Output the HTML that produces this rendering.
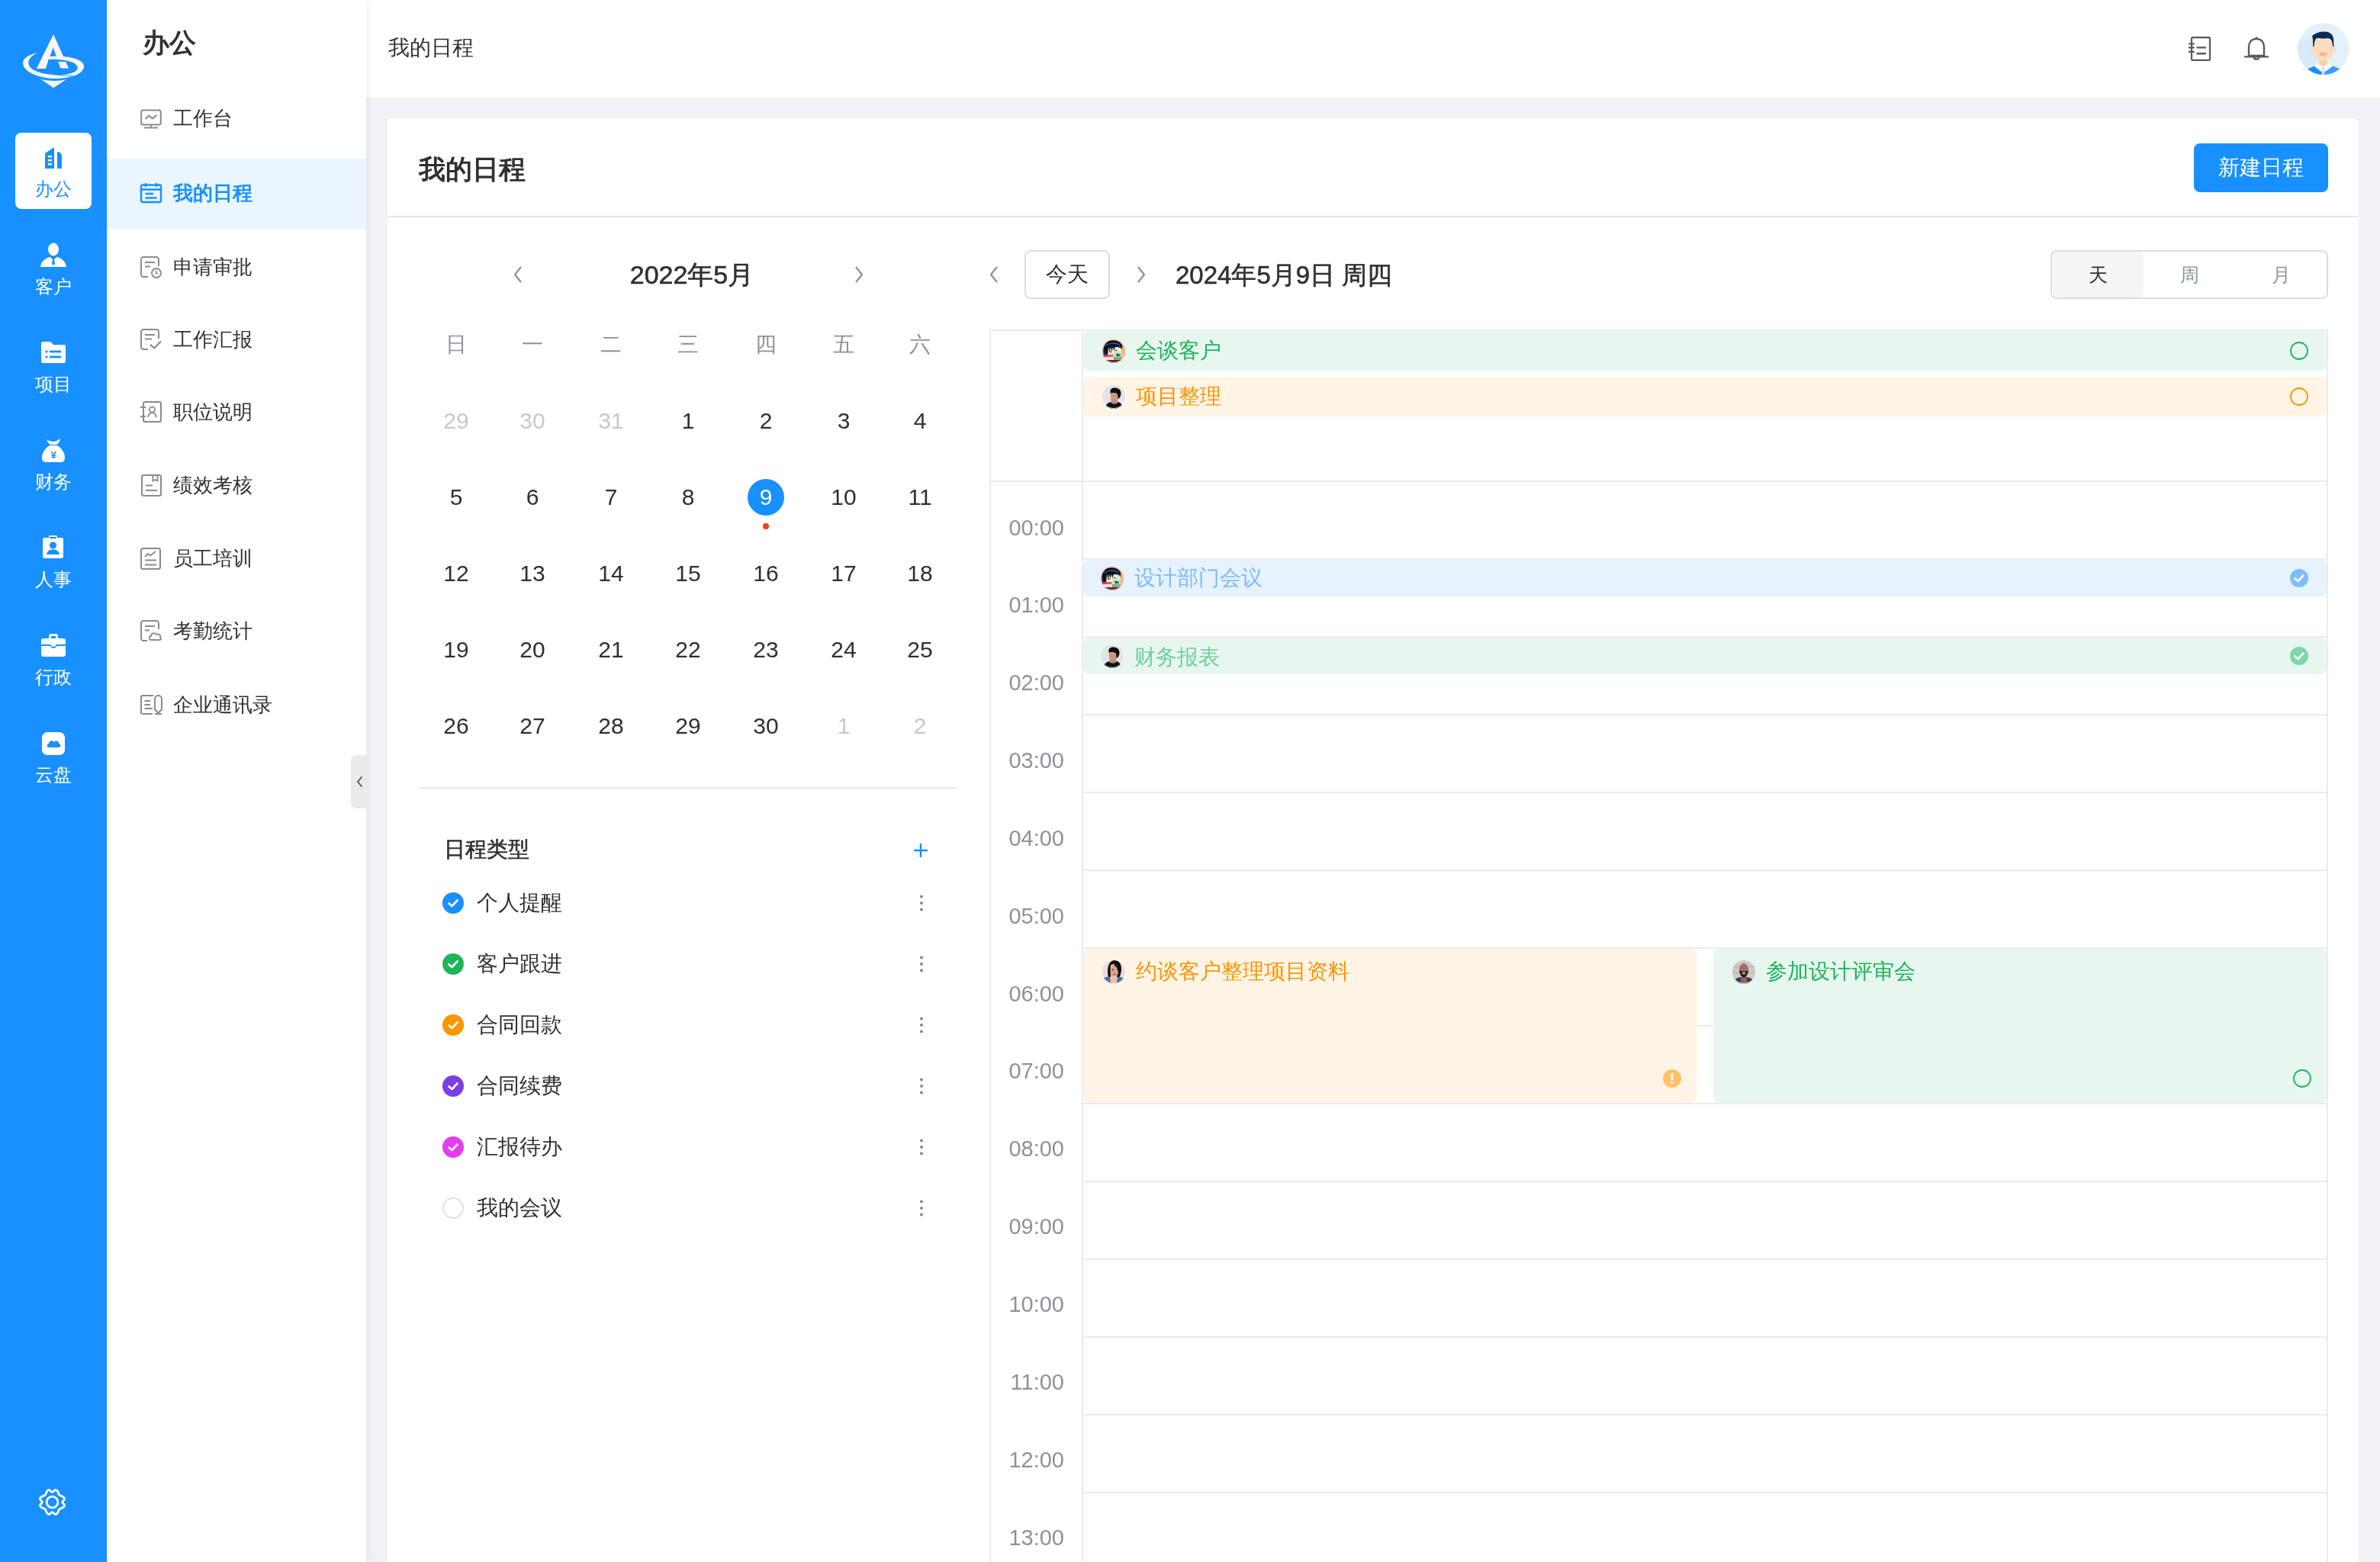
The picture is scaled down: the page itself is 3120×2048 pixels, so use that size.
<!DOCTYPE html>
<html><head><meta charset="utf-8">
<style>
*{box-sizing:border-box;margin:0;padding:0}
html,body{width:3120px;height:2048px;overflow:hidden}
body{position:relative;background:#F0F2F5;font-family:"Liberation Sans",sans-serif;color:#333}
.abs{position:absolute}
.t{position:absolute;white-space:nowrap;will-change:transform}
svg{overflow:visible}
</style></head><body>

<div class="abs" style="left:480px;top:0px;width:2640px;height:128px;background:#fff"></div>
<div class="abs" style="left:508px;top:156px;width:2584px;height:1944px;background:#fff;border-radius:0 4px 0 0"></div>
<div class="abs" style="left:140px;top:0px;width:340px;height:2048px;background:#fff;box-shadow:3px 0 10px rgba(0,0,0,.05)"></div>
<div class="abs" style="left:0px;top:0px;width:140px;height:2048px;background:#1890FF"></div>
<svg class="abs" style="left:25px;top:40px" width="90" height="80" viewBox="25 40 90 80"><path d="M70.1 44.9 L90 89.4 L79.3 89.4 L73.9 73.6 L65.2 74.3 L59.8 90 L47.8 90 Z" fill="#F7F7F7"/><path d="M69.8 62.5 L65.2 74.6 L73.9 74.2 Z" fill="#1890FF"/><path d="M63.5 77.6 L88 78.2 L89 81 L63 80.8 Z" fill="#1890FF"/><path d="M50 69.2 C38 71 29.5 77 30 83 C31 96 55 103 72 103 C95 103 110 96 110 87 C110 78 92 73.5 72 73.8 C68 73.9 66 74 64.5 74.3 L63.6 78.2 C68 77.8 72 77.7 76 77.9 C92 79 102 83 101.8 89.2 C101 95 88 98.5 76 98.4 C55 98 37 92 37.3 82 C37.5 76 44 71 50 69.2 Z" fill="#F7F7F7"/><path d="M71 97.4 C80 99.3 90 99.6 95.5 99.2" fill="none" stroke="#1890FF" stroke-width="0.9"/><path d="M52.7 103.3 C62 106.5 78 106.8 87 104 L70.1 115.2 Z" fill="#F7F7F7"/></svg>
<div class="abs" style="left:20px;top:174px;width:100px;height:100px;background:#fff;border-radius:8px"></div>
<svg class="abs" style="left:56.5px;top:191.0px" width="26" height="30" viewBox="0 0 26 30"><path d="M2 10 L14 2 L14 30 L2 30 Z" fill="#1890FF"/><path d="M18 8 C22 8 24 11 24 14 L24 30 L18 30 Z" fill="#1890FF"/><rect x="6" y="13" width="5" height="2.4" fill="#fff"/><rect x="6" y="18" width="5" height="2.4" fill="#fff"/><rect x="6" y="23" width="5" height="2.4" fill="#fff"/></svg>
<div class="t" style="left:-430.5px;width:1000px;text-align:center;top:236.0px;font-size:24px;line-height:24px;color:#1890FF;font-weight:400;">办公</div>
<svg class="abs" style="left:52.5px;top:318.0px" width="34" height="32" viewBox="0 0 34 32"><ellipse cx="17" cy="9" rx="7" ry="8.5" fill="#fff"/><path d="M0 32 C1 24 7 20 13 19 L17 23 L21 19 C27 20 33 24 34 32 Z" fill="#fff"/><path d="M16 22 L18 22 L19 28 L17 30 L15 28 Z" fill="#1890FF"/></svg>
<div class="t" style="left:-430.5px;width:1000px;text-align:center;top:364.0px;font-size:24px;line-height:24px;color:#fff;font-weight:400;">客户</div>
<svg class="abs" style="left:53.5px;top:448.0px" width="32" height="28" viewBox="0 0 32 28"><path d="M0 2 C0 1 1 0 2 0 L12 0 L16 4 L30 4 C31 4 32 5 32 6 L32 26 C32 27 31 28 30 28 L2 28 C1 28 0 27 0 26 Z" fill="#fff"/><circle cx="7" cy="13" r="1.6" fill="#1890FF"/><circle cx="7" cy="20" r="1.6" fill="#1890FF"/><rect x="11" y="11.6" width="15" height="2.8" fill="#1890FF"/><rect x="11" y="18.6" width="15" height="2.8" fill="#1890FF"/></svg>
<div class="t" style="left:-430.5px;width:1000px;text-align:center;top:492.0px;font-size:24px;line-height:24px;color:#fff;font-weight:400;">项目</div>
<svg class="abs" style="left:52.5px;top:574.0px" width="34" height="32" viewBox="0 0 34 32"><path d="M8 2 C14 6 20 6 26 1 C26 5 23 8 21 9 L13 9 C11 8 9 5 8 2 Z" fill="#fff"/><path d="M12 10 L22 10 C28 14 32 20 32 26 C32 30 30 32 26 32 L8 32 C4 32 2 30 2 26 C2 20 6 14 12 10 Z" fill="#fff"/><text x="17" y="27" font-size="13" font-weight="bold" text-anchor="middle" fill="#1890FF" font-family="Liberation Sans">¥</text></svg>
<div class="t" style="left:-430.5px;width:1000px;text-align:center;top:620.0px;font-size:24px;line-height:24px;color:#fff;font-weight:400;">财务</div>
<svg class="abs" style="left:56.0px;top:702.0px" width="27" height="30" viewBox="0 0 27 30"><rect x="0" y="3" width="27" height="27" rx="2.5" fill="#fff"/><rect x="8" y="0" width="11" height="5" rx="1.5" fill="#fff"/><rect x="9" y="2" width="9" height="2" fill="#1890FF"/><circle cx="13.5" cy="13" r="4.5" fill="#1890FF"/><path d="M5 25 C6 20 9 18.5 13.5 18.5 C18 18.5 21 20 22 25 Z" fill="#1890FF"/></svg>
<div class="t" style="left:-430.5px;width:1000px;text-align:center;top:748.0px;font-size:24px;line-height:24px;color:#fff;font-weight:400;">人事</div>
<svg class="abs" style="left:53.5px;top:831.0px" width="32" height="30" viewBox="0 0 32 30"><path d="M10 6 L10 3 C10 1 11 0 13 0 L19 0 C21 0 22 1 22 3 L22 6 L19 6 L19 3 L13 3 L13 6 Z" fill="#fff"/><rect x="0" y="6" width="32" height="24" rx="3" fill="#fff"/><path d="M0 14 L12 14 C13 18 19 18 20 14 L32 14 L32 16 L20 16 C19 20 13 20 12 16 L0 16 Z" fill="#1890FF"/></svg>
<div class="t" style="left:-430.5px;width:1000px;text-align:center;top:876.0px;font-size:24px;line-height:24px;color:#fff;font-weight:400;">行政</div>
<svg class="abs" style="left:54.5px;top:960.0px" width="30" height="30" viewBox="0 0 30 30"><rect x="0" y="0" width="30" height="30" rx="7" fill="#fff"/><path d="M9 20 C6 20 6 15 9 15 C9 11 14 10 16 13 C18 10 23 12 22 15 C25 15 25 20 22 20 Z" fill="#1890FF"/></svg>
<div class="t" style="left:-430.5px;width:1000px;text-align:center;top:1004.0px;font-size:24px;line-height:24px;color:#fff;font-weight:400;">云盘</div>
<svg class="abs" style="left:50px;top:1950.5px" width="37" height="37" viewBox="0 0 37 37"><g fill="none" stroke="#fff" stroke-width="2.8" stroke-linejoin="round"><path d="M31.70 18.50 L31.75 18.18 L31.91 17.86 L32.16 17.51 L32.49 17.15 L32.86 16.77 L33.25 16.36 L33.62 15.94 L33.96 15.49 L34.23 15.05 L34.40 14.61 L34.47 14.18 L34.42 13.79 L34.15 13.15 L33.76 12.57 L33.25 12.05 L32.66 11.60 L32.00 11.21 L31.31 10.88 L30.61 10.60 L29.94 10.34 L29.31 10.09 L28.75 9.82 L28.26 9.52 L27.83 9.17 L27.49 8.75 L27.19 8.26 L26.93 7.71 L26.69 7.09 L26.45 6.42 L26.17 5.73 L25.86 5.04 L25.49 4.38 L25.05 3.79 L24.54 3.28 L23.98 2.89 L23.35 2.63 L22.94 2.57 L22.51 2.63 L22.05 2.79 L21.60 3.06 L21.14 3.39 L20.70 3.76 L20.28 4.15 L19.89 4.52 L19.52 4.84 L19.16 5.09 L18.83 5.25 L18.50 5.30 L18.17 5.25 L17.84 5.09 L17.48 4.84 L17.11 4.52 L16.72 4.15 L16.30 3.76 L15.86 3.39 L15.40 3.06 L14.95 2.79 L14.49 2.63 L14.06 2.57 L13.65 2.63 L13.02 2.89 L12.46 3.28 L11.95 3.79 L11.51 4.38 L11.14 5.04 L10.83 5.73 L10.55 6.42 L10.31 7.09 L10.07 7.71 L9.81 8.26 L9.51 8.75 L9.17 9.17 L8.74 9.52 L8.25 9.82 L7.69 10.09 L7.06 10.34 L6.39 10.60 L5.69 10.88 L5.00 11.21 L4.34 11.60 L3.75 12.05 L3.24 12.57 L2.85 13.15 L2.58 13.79 L2.53 14.18 L2.60 14.61 L2.77 15.05 L3.04 15.49 L3.38 15.94 L3.75 16.36 L4.14 16.77 L4.51 17.15 L4.84 17.51 L5.09 17.86 L5.25 18.18 L5.30 18.50 L5.25 18.82 L5.09 19.14 L4.84 19.49 L4.51 19.85 L4.14 20.23 L3.75 20.64 L3.38 21.06 L3.04 21.51 L2.77 21.95 L2.60 22.39 L2.53 22.82 L2.58 23.21 L2.85 23.85 L3.24 24.43 L3.75 24.95 L4.34 25.40 L5.00 25.79 L5.69 26.12 L6.39 26.40 L7.06 26.66 L7.69 26.91 L8.25 27.18 L8.74 27.48 L9.17 27.83 L9.51 28.25 L9.81 28.74 L10.07 29.29 L10.31 29.91 L10.55 30.58 L10.83 31.27 L11.14 31.96 L11.51 32.62 L11.95 33.21 L12.46 33.72 L13.02 34.11 L13.65 34.37 L14.06 34.43 L14.49 34.37 L14.95 34.21 L15.40 33.94 L15.86 33.61 L16.30 33.24 L16.72 32.85 L17.11 32.48 L17.48 32.16 L17.84 31.91 L18.17 31.75 L18.50 31.70 L18.83 31.75 L19.16 31.91 L19.52 32.16 L19.89 32.48 L20.28 32.85 L20.70 33.24 L21.14 33.61 L21.60 33.94 L22.05 34.21 L22.51 34.37 L22.94 34.43 L23.35 34.37 L23.98 34.11 L24.54 33.72 L25.05 33.21 L25.49 32.62 L25.86 31.96 L26.17 31.27 L26.45 30.58 L26.69 29.91 L26.93 29.29 L27.19 28.74 L27.49 28.25 L27.83 27.83 L28.26 27.48 L28.75 27.18 L29.31 26.91 L29.94 26.66 L30.61 26.40 L31.31 26.12 L32.00 25.79 L32.66 25.40 L33.25 24.95 L33.76 24.43 L34.15 23.85 L34.42 23.21 L34.47 22.82 L34.40 22.39 L34.23 21.95 L33.96 21.51 L33.62 21.06 L33.25 20.64 L32.86 20.23 L32.49 19.85 L32.16 19.49 L31.91 19.14 L31.75 18.82 Z"/><circle cx="18.5" cy="18.5" r="7.3"/></g></svg>
<div class="t" style="left:187px;top:37.5px;font-size:35px;line-height:35px;color:#2F3033;font-weight:700;">办公</div>
<div class="abs" style="left:140px;top:208px;width:340px;height:92px;background:#EAF5FE"></div>
<svg class="abs" style="left:184px;top:141px" width="28" height="28" viewBox="0 0 28 28"><rect x="1.2" y="3.5" width="25.6" height="18.9" rx="2.5" fill="none" stroke="#878B94" stroke-width="2"/><path d="M6.5 15 L11 10.6 L16 14.4 L21.5 10" fill="none" stroke="#878B94" stroke-width="2"/><path d="M14 22.4 L14 26 M4.8 26.6 L23 26.6" stroke="#878B94" stroke-width="2"/></svg>
<div class="t" style="left:226.5px;top:142.0px;font-size:26px;line-height:26px;color:#2F3033;font-weight:400;">工作台</div>
<svg class="abs" style="left:184px;top:239px" width="28" height="28" viewBox="0 0 28 28"><rect x="1" y="3.5" width="26" height="22.5" rx="2" fill="none" stroke="#1890FF" stroke-width="2.4"/><path d="M7 1 L7 6 M21 1 L21 6 M1 9.5 L27 9.5 M6.5 15 L17 15 M6.5 20.5 L21.5 20.5" stroke="#1890FF" stroke-width="2.4"/></svg>
<div class="t" style="left:226.5px;top:240.0px;font-size:26px;line-height:26px;color:#1890FF;font-weight:700;">我的日程</div>
<svg class="abs" style="left:184px;top:335.5px" width="28" height="28" viewBox="0 0 28 28"><path d="M10 27 L4 27 C2.5 27 1 25.5 1 24 L1 4 C1 2.5 2.5 1 4 1 L21 1 C22.5 1 24 2.5 24 4 L24 13" fill="none" stroke="#878B94" stroke-width="2"/><path d="M6 8 L19 8 M6 13.5 L13 13.5" stroke="#878B94" stroke-width="2"/><circle cx="21" cy="22" r="6" fill="none" stroke="#878B94" stroke-width="1.8"/><path d="M20.5 18.5 L20.5 22.5 L23.5 22.5" fill="none" stroke="#878B94" stroke-width="1.6"/></svg>
<div class="t" style="left:226.5px;top:336.5px;font-size:26px;line-height:26px;color:#2F3033;font-weight:400;">申请审批</div>
<svg class="abs" style="left:184px;top:431px" width="28" height="28" viewBox="0 0 28 28"><path d="M10 27 L4 27 C2.5 27 1 25.5 1 24 L1 4 C1 2.5 2.5 1 4 1 L21 1 C22.5 1 24 2.5 24 4 L24 13" fill="none" stroke="#878B94" stroke-width="2"/><path d="M6 8 L19 8 M6 13.5 L15 13.5" stroke="#878B94" stroke-width="2"/><path d="M13 20.5 L18 25.5 L27 16.5" fill="none" stroke="#878B94" stroke-width="2.2"/></svg>
<div class="t" style="left:226.5px;top:432.0px;font-size:26px;line-height:26px;color:#2F3033;font-weight:400;">工作汇报</div>
<svg class="abs" style="left:184px;top:526px" width="28" height="28" viewBox="0 0 28 28"><rect x="4" y="1" width="23" height="26" rx="2" fill="none" stroke="#878B94" stroke-width="2"/><path d="M0 8 L7 8 M0 20 L7 20" stroke="#878B94" stroke-width="2"/><circle cx="15.5" cy="11" r="3.6" fill="none" stroke="#878B94" stroke-width="1.8"/><path d="M10 21 C11 16.5 13 15 15.5 15 C18 15 20 16.5 21 21" fill="none" stroke="#878B94" stroke-width="1.8"/></svg>
<div class="t" style="left:226.5px;top:527.0px;font-size:26px;line-height:26px;color:#2F3033;font-weight:400;">职位说明</div>
<svg class="abs" style="left:184px;top:622px" width="28" height="28" viewBox="0 0 28 28"><rect x="2" y="1" width="25" height="27" rx="2.5" fill="none" stroke="#878B94" stroke-width="2"/><path d="M16.5 1 L16.5 8.5 L19.5 7 L22.5 8.5 L22.5 1" fill="none" stroke="#878B94" stroke-width="1.8"/><path d="M7 14.5 L16 14.5 M7 21 L22 21" stroke="#878B94" stroke-width="2"/></svg>
<div class="t" style="left:226.5px;top:623.0px;font-size:26px;line-height:26px;color:#2F3033;font-weight:400;">绩效考核</div>
<svg class="abs" style="left:184px;top:717.5px" width="28" height="28" viewBox="0 0 28 28"><rect x="1" y="1" width="25" height="27" rx="2.5" fill="none" stroke="#878B94" stroke-width="2"/><path d="M6 12 L10 8 L13 10.5 L20 5" fill="none" stroke="#878B94" stroke-width="1.8"/><path d="M6 16.5 L21 16.5 M6 22.5 L21 22.5" stroke="#878B94" stroke-width="2"/></svg>
<div class="t" style="left:226.5px;top:718.5px;font-size:26px;line-height:26px;color:#2F3033;font-weight:400;">员工培训</div>
<svg class="abs" style="left:184px;top:813px" width="28" height="28" viewBox="0 0 28 28"><path d="M9 27 L4 27 C2.5 27 1 25.5 1 24 L1 4 C1 2.5 2.5 1 4 1 L21 1 C22.5 1 24 2.5 24 4 L24 12" fill="none" stroke="#878B94" stroke-width="2"/><path d="M6 8 L19 8 M6 13.5 L12 13.5" stroke="#878B94" stroke-width="2"/><path d="M14 26 C11 26 11 21 14 21 C14 17 19.5 16 21 19 C24 17.5 27.5 20 26 23 C28 24 27.5 26 25 26 Z" fill="none" stroke="#878B94" stroke-width="1.8"/></svg>
<div class="t" style="left:226.5px;top:814.0px;font-size:26px;line-height:26px;color:#2F3033;font-weight:400;">考勤统计</div>
<svg class="abs" style="left:184px;top:910px" width="28" height="28" viewBox="0 0 28 28"><path d="M16 26 L3 26 C2 26 1 25 1 24 L1 4 C1 3 2 2 3 2 L17 2" fill="none" stroke="#878B94" stroke-width="2"/><path d="M5.5 9 L13 9 M5.5 14 L13 14 M5.5 19 L16 19" stroke="#878B94" stroke-width="2"/><path d="M19 6 C19 3 22 2 23.5 2 C25 2 28 3 28 6 L28 20 L23.5 25 L19 20 Z" fill="none" stroke="#878B94" stroke-width="2"/><path d="M19 26 L28 26" stroke="#878B94" stroke-width="2"/></svg>
<div class="t" style="left:226.5px;top:911.0px;font-size:26px;line-height:26px;color:#2F3033;font-weight:400;">企业通讯录</div>
<div class="abs" style="left:460px;top:990px;width:20px;height:70px;background:#EAEAEB;border-radius:8px 0 0 8px"></div>
<svg class="abs" style="left:467px;top:1018px" width="10" height="14" viewBox="0 0 10 14"><path d="M7 1 L2 7 L7 13" fill="none" stroke="#505257" stroke-width="1.9" stroke-linecap="round" stroke-linejoin="round"/></svg>
<div class="t" style="left:509px;top:48.5px;font-size:28px;line-height:28px;color:#2F3033;font-weight:400;">我的日程</div>
<svg class="abs" style="left:2869px;top:48px" width="30" height="32" viewBox="0 0 30 32"><rect x="4" y="1.2" width="24" height="29.6" rx="1.5" fill="none" stroke="#58595D" stroke-width="2.2"/><path d="M0.8 9.5 L6.8 9.5 M0.8 14.4 L6.8 14.4 M0.8 19.9 L6.8 19.9" stroke="#58595D" stroke-width="2.2" stroke-linecap="round"/><path d="M11.5 14.4 L22 14.4 M11.5 22.3 L22 22.3" stroke="#58595D" stroke-width="2.4" stroke-linecap="round"/></svg>
<svg class="abs" style="left:2942px;top:47px" width="32" height="34" viewBox="0 0 32 34"><path d="M16 4 C9 4 6 9 6 15 L6 26 L26 26 L26 15 C26 9 23 4 16 4 Z" fill="none" stroke="#595959" stroke-width="2.4"/><path d="M1.2 27.4 L31 27.4" stroke="#58595D" stroke-width="2.4" stroke-linecap="round"/><circle cx="16" cy="2.8" r="1.6" fill="#595959"/><path d="M12.5 28 C13 31.5 19 31.5 19.5 28" fill="none" stroke="#595959" stroke-width="2.4"/></svg>
<svg class="abs" style="left:3012px;top:30px" width="68" height="68" viewBox="0 0 68 68"><defs><clipPath id="av"><circle cx="34" cy="34" r="34"/></clipPath></defs>
<g clip-path="url(#av)"><circle cx="34" cy="34" r="34" fill="#E4F1FD"/>
<path d="M0 24 L19 17 L30 70 L0 70 Z" fill="#D8E9F9"/>
<path d="M10 70 L13 60.6 L21.7 56.8 L31.9 64.7 L33.5 70 Z" fill="#1A8CFF"/>
<path d="M58 70 L55.2 60.3 L46.3 56.5 L35 64.7 L33.5 70 Z" fill="#3A9DFF"/>
<path d="M21.7 56.6 L25.8 52.6 L33.5 57 L40.1 52.6 L45.8 56.5 L37 63.1 L33.5 58.5 L30.4 63.1 Z" fill="#fff"/>
<path d="M31.9 58 L35 58 L35.5 70 L31.5 70 Z" fill="#CFE1FA"/>
<path d="M27.8 47 L39.1 47 L39.1 53.9 L33.5 57.5 L27.8 53.9 Z" fill="#FCCFA6"/>
<ellipse cx="18.9" cy="34.2" rx="2.2" ry="3.3" fill="#FDDBBF"/><ellipse cx="48.1" cy="34.2" rx="2.2" ry="3.3" fill="#FDDBBF"/>
<path d="M20.3 26 C20.3 21 24 20 27 20 L40 20 C44 20 46.3 22 46.3 27 L46.3 38 C46.3 45 40 49.5 33.3 49.5 C26.5 49.5 20.3 45 20.3 38 Z" fill="#FDDBBF"/>
<path d="M27.8 39 L39.1 39 C38.8 42 36.5 43.8 33.45 43.8 C30.4 43.8 28.1 42 27.8 39 Z" fill="#F4B78C"/>
<path d="M19.1 16.8 C24 13 29 11.4 34 11.4 C42 11.4 46 14.5 47 21 L47.5 31 L46 31 C45.5 26 45 22 41.8 20.6 C38 19.6 35 20.8 33 20.6 C30 20.2 28 19.6 25 20.2 C23 21 22 24 21.5 31 L20.2 31 C20 25 20.3 21 19.4 19 Z" fill="#052C55"/>
</g></svg>
<div class="t" style="left:549px;top:204.0px;font-size:35px;line-height:35px;color:#2F3033;font-weight:700;">我的日程</div>
<div class="abs" style="left:2876px;top:188px;width:176px;height:64px;background:#1890FF;border-radius:8px"></div>
<div class="t" style="left:2464px;width:1000px;text-align:center;top:206.0px;font-size:28px;line-height:28px;color:#fff;font-weight:400;">新建日程</div>
<div class="abs" style="left:508px;top:283px;width:2584px;height:2px;background:#E4E7EC"></div>
<svg class="abs" style="left:673px;top:349px" width="12" height="22" viewBox="0 0 12 22"><path d="M10 1 L2 11 L10 21" fill="none" stroke="#8A8F99" stroke-width="2.2"/></svg>
<svg class="abs" style="left:1120px;top:349px" width="12" height="22" viewBox="0 0 12 22"><path d="M2 1 L10 11 L2 21" fill="none" stroke="#8A8F99" stroke-width="2.2"/></svg>
<div class="t" style="left:407px;width:1000px;text-align:center;top:343.0px;font-size:34px;line-height:34px;color:#2F3033;font-weight:400;-webkit-text-stroke:0.6px currentColor;">2022年5月</div>
<div class="t" style="left:97.5px;width:1000px;text-align:center;top:438.0px;font-size:28px;line-height:28px;color:#8C929C;font-weight:400;">日</div>
<div class="t" style="left:197.5px;width:1000px;text-align:center;top:438.0px;font-size:28px;line-height:28px;color:#8C929C;font-weight:400;">一</div>
<div class="t" style="left:301px;width:1000px;text-align:center;top:438.0px;font-size:28px;line-height:28px;color:#8C929C;font-weight:400;">二</div>
<div class="t" style="left:402px;width:1000px;text-align:center;top:438.0px;font-size:28px;line-height:28px;color:#8C929C;font-weight:400;">三</div>
<div class="t" style="left:503.5px;width:1000px;text-align:center;top:438.0px;font-size:28px;line-height:28px;color:#8C929C;font-weight:400;">四</div>
<div class="t" style="left:605.5px;width:1000px;text-align:center;top:438.0px;font-size:28px;line-height:28px;color:#8C929C;font-weight:400;">五</div>
<div class="t" style="left:706px;width:1000px;text-align:center;top:438.0px;font-size:28px;line-height:28px;color:#8C929C;font-weight:400;">六</div>
<div class="t" style="left:97.5px;width:1000px;text-align:center;top:537.0px;font-size:30px;line-height:30px;color:#C4C8D0;font-weight:400;">29</div>
<div class="t" style="left:197.5px;width:1000px;text-align:center;top:537.0px;font-size:30px;line-height:30px;color:#C4C8D0;font-weight:400;">30</div>
<div class="t" style="left:301px;width:1000px;text-align:center;top:537.0px;font-size:30px;line-height:30px;color:#C4C8D0;font-weight:400;">31</div>
<div class="t" style="left:402px;width:1000px;text-align:center;top:537.0px;font-size:30px;line-height:30px;color:#2F3033;font-weight:400;">1</div>
<div class="t" style="left:503.5px;width:1000px;text-align:center;top:537.0px;font-size:30px;line-height:30px;color:#2F3033;font-weight:400;">2</div>
<div class="t" style="left:605.5px;width:1000px;text-align:center;top:537.0px;font-size:30px;line-height:30px;color:#2F3033;font-weight:400;">3</div>
<div class="t" style="left:706px;width:1000px;text-align:center;top:537.0px;font-size:30px;line-height:30px;color:#2F3033;font-weight:400;">4</div>
<div class="t" style="left:97.5px;width:1000px;text-align:center;top:637.0px;font-size:30px;line-height:30px;color:#2F3033;font-weight:400;">5</div>
<div class="t" style="left:197.5px;width:1000px;text-align:center;top:637.0px;font-size:30px;line-height:30px;color:#2F3033;font-weight:400;">6</div>
<div class="t" style="left:301px;width:1000px;text-align:center;top:637.0px;font-size:30px;line-height:30px;color:#2F3033;font-weight:400;">7</div>
<div class="t" style="left:402px;width:1000px;text-align:center;top:637.0px;font-size:30px;line-height:30px;color:#2F3033;font-weight:400;">8</div>
<div class="abs" style="left:979.5px;top:628px;width:48.0px;height:48px;background:#1890FF;border-radius:50%"></div>
<div class="t" style="left:503.5px;width:1000px;text-align:center;top:637.0px;font-size:30px;line-height:30px;color:#fff;font-weight:400;">9</div>
<div class="abs" style="left:999.5px;top:686px;width:8.0px;height:8px;background:#F5401E;border-radius:50%"></div>
<div class="t" style="left:605.5px;width:1000px;text-align:center;top:637.0px;font-size:30px;line-height:30px;color:#2F3033;font-weight:400;">10</div>
<div class="t" style="left:706px;width:1000px;text-align:center;top:637.0px;font-size:30px;line-height:30px;color:#2F3033;font-weight:400;">11</div>
<div class="t" style="left:97.5px;width:1000px;text-align:center;top:737.0px;font-size:30px;line-height:30px;color:#2F3033;font-weight:400;">12</div>
<div class="t" style="left:197.5px;width:1000px;text-align:center;top:737.0px;font-size:30px;line-height:30px;color:#2F3033;font-weight:400;">13</div>
<div class="t" style="left:301px;width:1000px;text-align:center;top:737.0px;font-size:30px;line-height:30px;color:#2F3033;font-weight:400;">14</div>
<div class="t" style="left:402px;width:1000px;text-align:center;top:737.0px;font-size:30px;line-height:30px;color:#2F3033;font-weight:400;">15</div>
<div class="t" style="left:503.5px;width:1000px;text-align:center;top:737.0px;font-size:30px;line-height:30px;color:#2F3033;font-weight:400;">16</div>
<div class="t" style="left:605.5px;width:1000px;text-align:center;top:737.0px;font-size:30px;line-height:30px;color:#2F3033;font-weight:400;">17</div>
<div class="t" style="left:706px;width:1000px;text-align:center;top:737.0px;font-size:30px;line-height:30px;color:#2F3033;font-weight:400;">18</div>
<div class="t" style="left:97.5px;width:1000px;text-align:center;top:837.0px;font-size:30px;line-height:30px;color:#2F3033;font-weight:400;">19</div>
<div class="t" style="left:197.5px;width:1000px;text-align:center;top:837.0px;font-size:30px;line-height:30px;color:#2F3033;font-weight:400;">20</div>
<div class="t" style="left:301px;width:1000px;text-align:center;top:837.0px;font-size:30px;line-height:30px;color:#2F3033;font-weight:400;">21</div>
<div class="t" style="left:402px;width:1000px;text-align:center;top:837.0px;font-size:30px;line-height:30px;color:#2F3033;font-weight:400;">22</div>
<div class="t" style="left:503.5px;width:1000px;text-align:center;top:837.0px;font-size:30px;line-height:30px;color:#2F3033;font-weight:400;">23</div>
<div class="t" style="left:605.5px;width:1000px;text-align:center;top:837.0px;font-size:30px;line-height:30px;color:#2F3033;font-weight:400;">24</div>
<div class="t" style="left:706px;width:1000px;text-align:center;top:837.0px;font-size:30px;line-height:30px;color:#2F3033;font-weight:400;">25</div>
<div class="t" style="left:97.5px;width:1000px;text-align:center;top:937.0px;font-size:30px;line-height:30px;color:#2F3033;font-weight:400;">26</div>
<div class="t" style="left:197.5px;width:1000px;text-align:center;top:937.0px;font-size:30px;line-height:30px;color:#2F3033;font-weight:400;">27</div>
<div class="t" style="left:301px;width:1000px;text-align:center;top:937.0px;font-size:30px;line-height:30px;color:#2F3033;font-weight:400;">28</div>
<div class="t" style="left:402px;width:1000px;text-align:center;top:937.0px;font-size:30px;line-height:30px;color:#2F3033;font-weight:400;">29</div>
<div class="t" style="left:503.5px;width:1000px;text-align:center;top:937.0px;font-size:30px;line-height:30px;color:#2F3033;font-weight:400;">30</div>
<div class="t" style="left:605.5px;width:1000px;text-align:center;top:937.0px;font-size:30px;line-height:30px;color:#C4C8D0;font-weight:400;">1</div>
<div class="t" style="left:706px;width:1000px;text-align:center;top:937.0px;font-size:30px;line-height:30px;color:#C4C8D0;font-weight:400;">2</div>
<div class="abs" style="left:548px;top:1032px;width:708px;height:2px;background:#E8EAEE"></div>
<div class="t" style="left:582px;top:1100.0px;font-size:28px;line-height:28px;color:#2F3033;font-weight:400;-webkit-text-stroke:0.6px currentColor;">日程类型</div>
<svg class="abs" style="left:1198px;top:1106px" width="18" height="18" viewBox="0 0 18 18"><path d="M9 0 L9 18 M0 9 L18 9" stroke="#1890FF" stroke-width="2.4"/></svg>
<svg class="abs" style="left:580px;top:1170px" width="28" height="28" viewBox="0 0 28 28"><circle cx="14" cy="14" r="14" fill="#1890FF"/><path d="M8.5 14.5 L12.5 18 L19.5 10.5" fill="none" stroke="#fff" stroke-width="2.6" stroke-linecap="round" stroke-linejoin="round"/></svg>
<div class="t" style="left:625px;top:1170.0px;font-size:28px;line-height:28px;color:#2F3033;font-weight:400;">个人提醒</div>
<svg class="abs" style="left:1205px;top:1173px" width="6" height="22" viewBox="0 0 6 22"><circle cx="3" cy="2.5" r="1.9" fill="#7D828B"/><circle cx="3" cy="11" r="1.9" fill="#7D828B"/><circle cx="3" cy="19.5" r="1.9" fill="#7D828B"/></svg>
<svg class="abs" style="left:580px;top:1250px" width="28" height="28" viewBox="0 0 28 28"><circle cx="14" cy="14" r="14" fill="#1DB45A"/><path d="M8.5 14.5 L12.5 18 L19.5 10.5" fill="none" stroke="#fff" stroke-width="2.6" stroke-linecap="round" stroke-linejoin="round"/></svg>
<div class="t" style="left:625px;top:1250.0px;font-size:28px;line-height:28px;color:#2F3033;font-weight:400;">客户跟进</div>
<svg class="abs" style="left:1205px;top:1253px" width="6" height="22" viewBox="0 0 6 22"><circle cx="3" cy="2.5" r="1.9" fill="#7D828B"/><circle cx="3" cy="11" r="1.9" fill="#7D828B"/><circle cx="3" cy="19.5" r="1.9" fill="#7D828B"/></svg>
<svg class="abs" style="left:580px;top:1330px" width="28" height="28" viewBox="0 0 28 28"><circle cx="14" cy="14" r="14" fill="#FA9600"/><path d="M8.5 14.5 L12.5 18 L19.5 10.5" fill="none" stroke="#fff" stroke-width="2.6" stroke-linecap="round" stroke-linejoin="round"/></svg>
<div class="t" style="left:625px;top:1330.0px;font-size:28px;line-height:28px;color:#2F3033;font-weight:400;">合同回款</div>
<svg class="abs" style="left:1205px;top:1333px" width="6" height="22" viewBox="0 0 6 22"><circle cx="3" cy="2.5" r="1.9" fill="#7D828B"/><circle cx="3" cy="11" r="1.9" fill="#7D828B"/><circle cx="3" cy="19.5" r="1.9" fill="#7D828B"/></svg>
<svg class="abs" style="left:580px;top:1410px" width="28" height="28" viewBox="0 0 28 28"><circle cx="14" cy="14" r="14" fill="#7B3FE4"/><path d="M8.5 14.5 L12.5 18 L19.5 10.5" fill="none" stroke="#fff" stroke-width="2.6" stroke-linecap="round" stroke-linejoin="round"/></svg>
<div class="t" style="left:625px;top:1410.0px;font-size:28px;line-height:28px;color:#2F3033;font-weight:400;">合同续费</div>
<svg class="abs" style="left:1205px;top:1413px" width="6" height="22" viewBox="0 0 6 22"><circle cx="3" cy="2.5" r="1.9" fill="#7D828B"/><circle cx="3" cy="11" r="1.9" fill="#7D828B"/><circle cx="3" cy="19.5" r="1.9" fill="#7D828B"/></svg>
<svg class="abs" style="left:580px;top:1490px" width="28" height="28" viewBox="0 0 28 28"><circle cx="14" cy="14" r="14" fill="#E63CF0"/><path d="M8.5 14.5 L12.5 18 L19.5 10.5" fill="none" stroke="#fff" stroke-width="2.6" stroke-linecap="round" stroke-linejoin="round"/></svg>
<div class="t" style="left:625px;top:1490.0px;font-size:28px;line-height:28px;color:#2F3033;font-weight:400;">汇报待办</div>
<svg class="abs" style="left:1205px;top:1493px" width="6" height="22" viewBox="0 0 6 22"><circle cx="3" cy="2.5" r="1.9" fill="#7D828B"/><circle cx="3" cy="11" r="1.9" fill="#7D828B"/><circle cx="3" cy="19.5" r="1.9" fill="#7D828B"/></svg>
<svg class="abs" style="left:580px;top:1570px" width="28" height="28" viewBox="0 0 28 28"><circle cx="14" cy="14" r="13" fill="none" stroke="#DDE0E6" stroke-width="2"/></svg>
<div class="t" style="left:625px;top:1570.0px;font-size:28px;line-height:28px;color:#2F3033;font-weight:400;">我的会议</div>
<svg class="abs" style="left:1205px;top:1573px" width="6" height="22" viewBox="0 0 6 22"><circle cx="3" cy="2.5" r="1.9" fill="#7D828B"/><circle cx="3" cy="11" r="1.9" fill="#7D828B"/><circle cx="3" cy="19.5" r="1.9" fill="#7D828B"/></svg>
<svg class="abs" style="left:1297px;top:349px" width="12" height="22" viewBox="0 0 12 22"><path d="M10 1 L2 11 L10 21" fill="none" stroke="#8A8F99" stroke-width="2.2"/></svg>
<div class="abs" style="left:1343px;top:328px;width:112px;height:64px;border:2px solid #D9DDE5;border-radius:8px;background:#fff"></div>
<div class="t" style="left:899px;width:1000px;text-align:center;top:346.0px;font-size:28px;line-height:28px;color:#2F3033;font-weight:400;">今天</div>
<svg class="abs" style="left:1490px;top:349px" width="12" height="22" viewBox="0 0 12 22"><path d="M2 1 L10 11 L2 21" fill="none" stroke="#8A8F99" stroke-width="2.2"/></svg>
<div class="t" style="left:1541px;top:343.5px;font-size:33px;line-height:33px;color:#2F3033;font-weight:400;-webkit-text-stroke:0.6px currentColor;">2024年5月9日 周四</div>
<div class="abs" style="left:2688px;top:328px;width:364px;height:64px;border:2px solid #D9DDE5;border-radius:8px;background:#fff"></div>
<div class="abs" style="left:2691px;top:330px;width:119px;height:60px;background:#F5F5F6;border-radius:6px"></div>
<div class="t" style="left:2250px;width:1000px;text-align:center;top:347.5px;font-size:25px;line-height:25px;color:#2F3033;font-weight:400;">天</div>
<div class="t" style="left:2369.5px;width:1000px;text-align:center;top:347.5px;font-size:25px;line-height:25px;color:#8C929C;font-weight:400;">周</div>
<div class="t" style="left:2489.5px;width:1000px;text-align:center;top:347.5px;font-size:25px;line-height:25px;color:#8C929C;font-weight:400;">月</div>
<div class="abs" style="left:1297px;top:432px;width:1755px;height:1668px;border:2px solid #EBEBEE;border-bottom:none"></div>
<div class="abs" style="left:1418px;top:434px;width:2px;height:1666px;background:#EBEBEE"></div>
<div class="abs" style="left:1299px;top:630px;width:1751px;height:2px;background:#EBEBEE"></div>
<div class="abs" style="left:1419px;top:732px;width:1631px;height:2px;background:#EBEBEE"></div>
<div class="abs" style="left:1419px;top:834px;width:1631px;height:2px;background:#EBEBEE"></div>
<div class="abs" style="left:1419px;top:936px;width:1631px;height:2px;background:#EBEBEE"></div>
<div class="abs" style="left:1419px;top:1038px;width:1631px;height:2px;background:#EBEBEE"></div>
<div class="abs" style="left:1419px;top:1140px;width:1631px;height:2px;background:#EBEBEE"></div>
<div class="abs" style="left:1419px;top:1242px;width:1631px;height:2px;background:#EBEBEE"></div>
<div class="abs" style="left:1419px;top:1344px;width:1631px;height:2px;background:#EBEBEE"></div>
<div class="abs" style="left:1419px;top:1446px;width:1631px;height:2px;background:#EBEBEE"></div>
<div class="abs" style="left:1419px;top:1548px;width:1631px;height:2px;background:#EBEBEE"></div>
<div class="abs" style="left:1419px;top:1650px;width:1631px;height:2px;background:#EBEBEE"></div>
<div class="abs" style="left:1419px;top:1752px;width:1631px;height:2px;background:#EBEBEE"></div>
<div class="abs" style="left:1419px;top:1854px;width:1631px;height:2px;background:#EBEBEE"></div>
<div class="abs" style="left:1419px;top:1956px;width:1631px;height:2px;background:#EBEBEE"></div>
<div class="abs" style="left:1419px;top:2058px;width:1631px;height:2px;background:#EBEBEE"></div>
<div class="t" style="left:394.5px;width:1000px;text-align:right;top:677.5px;font-size:29px;line-height:29px;color:#8C929C;font-weight:400;">00:00</div>
<div class="t" style="left:394.5px;width:1000px;text-align:right;top:779.35px;font-size:29px;line-height:29px;color:#8C929C;font-weight:400;">01:00</div>
<div class="t" style="left:394.5px;width:1000px;text-align:right;top:881.2px;font-size:29px;line-height:29px;color:#8C929C;font-weight:400;">02:00</div>
<div class="t" style="left:394.5px;width:1000px;text-align:right;top:983.05px;font-size:29px;line-height:29px;color:#8C929C;font-weight:400;">03:00</div>
<div class="t" style="left:394.5px;width:1000px;text-align:right;top:1084.9px;font-size:29px;line-height:29px;color:#8C929C;font-weight:400;">04:00</div>
<div class="t" style="left:394.5px;width:1000px;text-align:right;top:1186.75px;font-size:29px;line-height:29px;color:#8C929C;font-weight:400;">05:00</div>
<div class="t" style="left:394.5px;width:1000px;text-align:right;top:1288.6px;font-size:29px;line-height:29px;color:#8C929C;font-weight:400;">06:00</div>
<div class="t" style="left:394.5px;width:1000px;text-align:right;top:1390.4499999999998px;font-size:29px;line-height:29px;color:#8C929C;font-weight:400;">07:00</div>
<div class="t" style="left:394.5px;width:1000px;text-align:right;top:1492.3px;font-size:29px;line-height:29px;color:#8C929C;font-weight:400;">08:00</div>
<div class="t" style="left:394.5px;width:1000px;text-align:right;top:1594.15px;font-size:29px;line-height:29px;color:#8C929C;font-weight:400;">09:00</div>
<div class="t" style="left:394.5px;width:1000px;text-align:right;top:1696.0px;font-size:29px;line-height:29px;color:#8C929C;font-weight:400;">10:00</div>
<div class="t" style="left:394.5px;width:1000px;text-align:right;top:1797.85px;font-size:29px;line-height:29px;color:#8C929C;font-weight:400;">11:00</div>
<div class="t" style="left:394.5px;width:1000px;text-align:right;top:1899.6999999999998px;font-size:29px;line-height:29px;color:#8C929C;font-weight:400;">12:00</div>
<div class="t" style="left:394.5px;width:1000px;text-align:right;top:2001.55px;font-size:29px;line-height:29px;color:#8C929C;font-weight:400;">13:00</div>
<div class="abs" style="left:1420px;top:434px;width:1630px;height:52px;background:#E7F7EF;border-radius:8px"></div>
<svg class="abs" style="left:1444px;top:444px" width="32" height="32" viewBox="0 0 32 32"><defs><clipPath id="cg1"><circle cx="16" cy="16" r="16"/></clipPath></defs><g clip-path="url(#cg1)"><rect width="32" height="32" fill="#F4AF8A"/>
<path d="M8 11 L26 11 L27 22 L8 23 Z" fill="#F7EBE9"/>
<path d="M3.5 23 C1 16 2.5 6 10 3 C16 1 23 2.5 26.5 7.5 C27.5 9.5 27.5 12 26.5 13 C24 11.5 21 11 18 11 L9 11 L8 23 Z" fill="#0D1015"/>
<path d="M9 10.5 L10.5 18 L12 11 L13.5 17 L15 11 L16.5 16 L18 11 Z" fill="#15161C"/>
<path d="M4.5 9.5 C9 6 17 4.5 24 8" fill="none" stroke="#1F66B8" stroke-width="1.3"/>
<path d="M2.5 14 C3 17.5 4 20 6 22" fill="none" stroke="#1C4C8C" stroke-width="1.1"/>
<path d="M22 9 C24 10 26 12 27 14" fill="none" stroke="#1C4C8C" stroke-width="1.1"/>
<ellipse cx="11.8" cy="17.4" rx="1.3" ry="0.8" fill="#2A1C1C"/><ellipse cx="19.2" cy="15.6" rx="1.3" ry="0.8" fill="#2A1C1C"/>
<path d="M15.5 17 C15.5 16.3 16 16 16.5 16 L26 16 C26.6 16 27 16.4 27 17 L27 28 L15.5 28 Z" fill="#D0EDA8"/>
<rect x="15.5" y="24" width="11.5" height="4.5" fill="#93A865"/>
<path d="M18.5 21.5 C19.5 19 22 19 23 20.5 C24.5 19.8 26 21.5 24.5 23 L20.5 23.5 Z" fill="#1A6CC0"/>
<path d="M2 21.5 L15.5 21 L15.5 23.5 L3 24.5 Z" fill="#D84A5A"/>
<path d="M3 24.5 L15.5 23.5 L16 28.5 L6 28.5 Z" fill="#F6DEDC"/>
<rect x="0" y="28" width="32" height="4" fill="#5A2A32"/></g><circle cx="16" cy="16" r="15.6" fill="none" stroke="#fff" stroke-width="0.9" opacity="0.9"/></svg>
<div class="t" style="left:1489px;top:446.0px;font-size:28px;line-height:28px;color:#1DB45A;font-weight:400;">会谈客户</div>
<svg class="abs" style="left:3002px;top:448px" width="24" height="24" viewBox="0 0 24 24"><circle cx="12" cy="12" r="11" fill="none" stroke="#1DB45A" stroke-width="1.8"/></svg>
<div class="abs" style="left:1420px;top:494px;width:1630px;height:52px;background:#FFF4E6;border-radius:8px"></div>
<svg class="abs" style="left:1444px;top:504px" width="32" height="32" viewBox="0 0 32 32"><defs><clipPath id="cg2"><circle cx="16" cy="16" r="16"/></clipPath></defs><g clip-path="url(#cg2)"><rect width="32" height="32" fill="#E4E4E7"/>
<path d="M4 32 C5 26 9 23.5 13 23 L21 23 C25 23.5 27 26 28 32 Z" fill="#111"/>
<path d="M12.5 19 L21 19 L21 24.5 C19 26 15 26 12.5 24.5 Z" fill="#C08C74"/>
<path d="M11.5 10 C11 6 14 4.5 17 4.5 C22 4.5 25.5 7 25.5 11.5 C25.5 15 24 18 21.5 19.5 L21 13 C19 11 15 10.5 11.5 12 Z" fill="#0C0C0C"/>
<path d="M11.8 11.5 C15 10.5 19 11 21 13 L21.5 19 C20 21 16 21.5 13 20.5 C12 18 11.3 14 11.8 11.5 Z" fill="#C99A82"/></g><circle cx="16" cy="16" r="15.6" fill="none" stroke="#fff" stroke-width="0.9" opacity="0.9"/></svg>
<div class="t" style="left:1489px;top:506.0px;font-size:28px;line-height:28px;color:#FA9600;font-weight:400;">项目整理</div>
<svg class="abs" style="left:3002px;top:508px" width="24" height="24" viewBox="0 0 24 24"><circle cx="12" cy="12" r="11" fill="none" stroke="#FA9600" stroke-width="1.8"/></svg>
<div class="abs" style="left:1420px;top:734px;width:1630px;height:48px;background:#E6F2FE;border-radius:8px"></div>
<svg class="abs" style="left:1442px;top:742px" width="32" height="32" viewBox="0 0 32 32"><defs><clipPath id="cg3"><circle cx="16" cy="16" r="16"/></clipPath></defs><g clip-path="url(#cg3)"><rect width="32" height="32" fill="#F4AF8A"/>
<path d="M8 11 L26 11 L27 22 L8 23 Z" fill="#F7EBE9"/>
<path d="M3.5 23 C1 16 2.5 6 10 3 C16 1 23 2.5 26.5 7.5 C27.5 9.5 27.5 12 26.5 13 C24 11.5 21 11 18 11 L9 11 L8 23 Z" fill="#0D1015"/>
<path d="M9 10.5 L10.5 18 L12 11 L13.5 17 L15 11 L16.5 16 L18 11 Z" fill="#15161C"/>
<path d="M4.5 9.5 C9 6 17 4.5 24 8" fill="none" stroke="#1F66B8" stroke-width="1.3"/>
<path d="M2.5 14 C3 17.5 4 20 6 22" fill="none" stroke="#1C4C8C" stroke-width="1.1"/>
<path d="M22 9 C24 10 26 12 27 14" fill="none" stroke="#1C4C8C" stroke-width="1.1"/>
<ellipse cx="11.8" cy="17.4" rx="1.3" ry="0.8" fill="#2A1C1C"/><ellipse cx="19.2" cy="15.6" rx="1.3" ry="0.8" fill="#2A1C1C"/>
<path d="M15.5 17 C15.5 16.3 16 16 16.5 16 L26 16 C26.6 16 27 16.4 27 17 L27 28 L15.5 28 Z" fill="#D0EDA8"/>
<rect x="15.5" y="24" width="11.5" height="4.5" fill="#93A865"/>
<path d="M18.5 21.5 C19.5 19 22 19 23 20.5 C24.5 19.8 26 21.5 24.5 23 L20.5 23.5 Z" fill="#1A6CC0"/>
<path d="M2 21.5 L15.5 21 L15.5 23.5 L3 24.5 Z" fill="#D84A5A"/>
<path d="M3 24.5 L15.5 23.5 L16 28.5 L6 28.5 Z" fill="#F6DEDC"/>
<rect x="0" y="28" width="32" height="4" fill="#5A2A32"/></g><circle cx="16" cy="16" r="15.6" fill="none" stroke="#fff" stroke-width="0.9" opacity="0.9"/></svg>
<div class="t" style="left:1487px;top:744.0px;font-size:28px;line-height:28px;color:#7DBBF7;font-weight:400;">设计部门会议</div>
<svg class="abs" style="left:3002px;top:746px" width="24" height="24" viewBox="0 0 24 24"><circle cx="12" cy="12" r="12" fill="#7DBDFD"/><path d="M6.5 12.5 L10.5 16 L17.5 8.5" fill="none" stroke="#fff" stroke-width="2.6" stroke-linecap="round" stroke-linejoin="round"/></svg>
<div class="abs" style="left:1420px;top:836px;width:1630px;height:48px;background:#E7F7EF;border-radius:8px"></div>
<svg class="abs" style="left:1442px;top:844px" width="32" height="32" viewBox="0 0 32 32"><defs><clipPath id="cg4"><circle cx="16" cy="16" r="16"/></clipPath></defs><g clip-path="url(#cg4)"><rect width="32" height="32" fill="#E4E4E7"/>
<path d="M4 32 C5 26 9 23.5 13 23 L21 23 C25 23.5 27 26 28 32 Z" fill="#111"/>
<path d="M12.5 19 L21 19 L21 24.5 C19 26 15 26 12.5 24.5 Z" fill="#C08C74"/>
<path d="M11.5 10 C11 6 14 4.5 17 4.5 C22 4.5 25.5 7 25.5 11.5 C25.5 15 24 18 21.5 19.5 L21 13 C19 11 15 10.5 11.5 12 Z" fill="#0C0C0C"/>
<path d="M11.8 11.5 C15 10.5 19 11 21 13 L21.5 19 C20 21 16 21.5 13 20.5 C12 18 11.3 14 11.8 11.5 Z" fill="#C99A82"/></g><circle cx="16" cy="16" r="15.6" fill="none" stroke="#fff" stroke-width="0.9" opacity="0.9"/></svg>
<div class="t" style="left:1487px;top:847.5px;font-size:28px;line-height:28px;color:#6FCF99;font-weight:400;">财务报表</div>
<svg class="abs" style="left:3002px;top:848px" width="24" height="24" viewBox="0 0 24 24"><circle cx="12" cy="12" r="12" fill="#7DD6A6"/><path d="M6.5 12.5 L10.5 16 L17.5 8.5" fill="none" stroke="#fff" stroke-width="2.6" stroke-linecap="round" stroke-linejoin="round"/></svg>
<div class="abs" style="left:1420px;top:1244px;width:804px;height:202px;background:#FFF4E6;border-radius:8px"></div>
<svg class="abs" style="left:1444px;top:1258px" width="32" height="32" viewBox="0 0 32 32"><defs><clipPath id="cg5"><circle cx="16" cy="16" r="16"/></clipPath></defs><g clip-path="url(#cg5)"><rect width="32" height="32" fill="#F4DAD6"/>
<path d="M9 23 C7 14 8 3 16 1 C23 0.5 26.5 6 26 14 C25.5 19 24 22 23 24 L20 24 L21 10 L12 10 L12 24 Z" fill="#0B0F10"/>
<path d="M11.5 8 C14 5 19 5.5 21 9 L22 18 C21 21 19 22.5 16.5 22.5 C14 22.5 12 21 11.5 18 Z" fill="#D8A68A"/>
<path d="M17 6 C20 7 23 10 23.5 14 L21 15 C21 11 19 9 17 8 Z" fill="#0B0F10"/>
<ellipse cx="17" cy="19.5" rx="2.2" ry="0.9" fill="#B85A4E"/>
<circle cx="15" cy="13.5" r="1" fill="#3A2A24"/>
<path d="M2 32 L3 24 C6 22.5 9 22.5 11 23 L21 23 C24 22.5 27 23.5 29 25 L30 32 Z" fill="#4A7299"/>
<path d="M11 23 L21 23 L20 32 L12 32 Z" fill="#E8BFA8"/></g><circle cx="16" cy="16" r="15.6" fill="none" stroke="#fff" stroke-width="0.9" opacity="0.9"/></svg>
<div class="t" style="left:1489px;top:1260.0px;font-size:28px;line-height:28px;color:#FA9600;font-weight:400;">约谈客户整理项目资料</div>
<svg class="abs" style="left:2180px;top:1402px" width="24" height="24" viewBox="0 0 24 24"><circle cx="12" cy="12" r="12" fill="#FFC266"/><path d="M12 6 L12 13.5" stroke="#fff" stroke-width="2.6" stroke-linecap="round"/><circle cx="12" cy="17.5" r="1.5" fill="#fff"/></svg>
<div class="abs" style="left:2246px;top:1244px;width:804px;height:202px;background:#E7F7EF;border-radius:8px"></div>
<svg class="abs" style="left:2270px;top:1258px" width="32" height="32" viewBox="0 0 32 32"><defs><clipPath id="cg6"><circle cx="16" cy="16" r="16"/></clipPath></defs><g clip-path="url(#cg6)"><rect width="32" height="32" fill="#CFC9C6"/>
<rect x="0" y="9" width="32" height="1" fill="#B0A79F"/><rect x="0" y="17.5" width="32" height="1" fill="#B8AFA8"/>
<path d="M4 32 L4.5 26 C8 23.5 12 23 16 23 C20 23 24 23.5 27 26 L28 32 Z" fill="#2E3A64"/>
<ellipse cx="16" cy="14" rx="6" ry="9" fill="#A06E68"/>
<path d="M10 14 C11 20 13 23.5 16 23.5 C19 23.5 21 20 22 14 C20 16 12 16 10 14 Z" fill="#221A20"/>
<ellipse cx="16" cy="18" rx="2.6" ry="1.6" fill="#C89A90"/>
<path d="M12 23.5 L20 23.5 L20.5 32 L11.5 32 Z" fill="#9A5E54"/></g><circle cx="16" cy="16" r="15.6" fill="none" stroke="#fff" stroke-width="0.9" opacity="0.9"/></svg>
<div class="t" style="left:2315px;top:1260.0px;font-size:28px;line-height:28px;color:#1DB45A;font-weight:400;">参加设计评审会</div>
<svg class="abs" style="left:3006px;top:1402px" width="24" height="24" viewBox="0 0 24 24"><circle cx="12" cy="12" r="11" fill="none" stroke="#1DB45A" stroke-width="1.8"/></svg>
</body></html>
